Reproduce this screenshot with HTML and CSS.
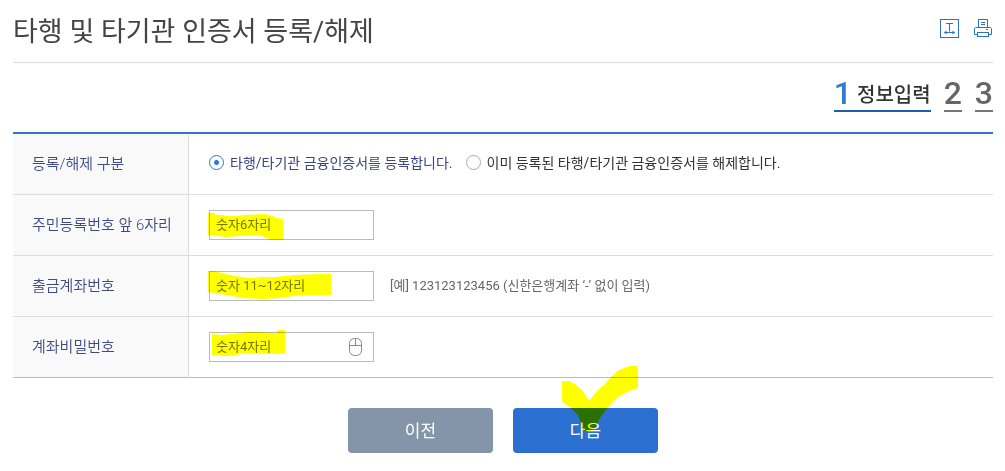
FILE: index.html
```html
<!DOCTYPE html>
<html lang="ko">
<head>
  <meta charset="UTF-8" />
  <meta name="viewport" content="width=device-width, initial-scale=1.0"/>
  <title>타행 및 타기관 인증서 등록/해제</title>
  <link rel="stylesheet" href="styles.css">
</head>
<body>

  <header class="page-header">
    <h1>타행 및 타기관 인증서 등록/해제</h1>
    <div class="tools">
      <button type="button" class="tool" aria-label="글자 크기">
        <svg width="19" height="19" viewBox="0 0 19 19" fill="none" stroke="currentColor">
          <rect x="0.5" y="0.5" width="18" height="18"/>
          <path d="M6 4.5h7M9.5 4.5v8M4.5 13.5h10"/>
          <path d="M6.5 11.5v4L4 13.5zM12.5 11.5v4l2.5-2z" fill="currentColor" stroke="none"/>
        </svg>
      </button>
      <button type="button" class="tool" aria-label="인쇄">
        <svg width="18" height="18" viewBox="0 0 18 18" fill="none" stroke="currentColor">
          <path d="M4.5 8.5v-8h9v8M7 3.5h4M7 5.5h4"/>
          <path d="M3.5 15.5h-3v-6l1-1h15l1 1v6h-3M12 10.5h2"/>
          <rect x="3.5" y="13.5" width="11" height="4"/>
        </svg>
      </button>
    </div>
  </header>

  <ol class="steps">
    <li class="active"><strong>1</strong><span>정보입력</span></li>
    <li><strong>2</strong></li>
    <li><strong>3</strong></li>
  </ol>

  <form id="certForm">
    <table class="form-table">
      <tbody>
        <tr>
          <th scope="row">등록/해제 구분</th>
          <td>
            <div class="radios">
              <label class="selected"><input type="radio" name="certType" value="add" checked />타행/타기관 금융인증서를 등록합니다.</label>
              <label><input type="radio" name="certType" value="remove" />이미 등록된 타행/타기관 금융인증서를 해제합니다.</label>
            </div>
          </td>
        </tr>
        <tr>
          <th scope="row"><label for="birth">주민등록번호 앞 6자리</label></th>
          <td>
            <div class="field">
              <input type="text" id="birth" placeholder="숫자6자리" />
              <svg class="marker marker-birth" width="75" height="27" viewBox="0 0 75 27">
                <path d="M0 0h7v2l7 0 5 1h8l10-1 20-1 8 2 4 2 6 1v21H62l-4-2-4-2-9-1-13 1-15 1-7-1-10-1z"/>
              </svg>
            </div>
          </td>
        </tr>
        <tr>
          <th scope="row"><label for="account">출금계좌번호</label></th>
          <td>
            <div class="field">
              <input type="text" id="account" placeholder="숫자 11~12자리" />
              <svg class="marker marker-account" width="123" height="28" viewBox="0 0 123 28">
                <path d="M0 0h6l8 2 13 3 15 2 12-1h13l20-2 25-1h11v21H92l-20 3-18 1-20-1-10-2-12-2-12-2z"/>
              </svg>
              <span class="hint">[예] 123123123456 (신한은행계좌 ‘-’ 없이 입력)</span>
            </div>
          </td>
        </tr>
        <tr>
          <th scope="row"><label for="accountPw">계좌비밀번호</label></th>
          <td>
            <div class="field">
              <input type="password" id="accountPw" placeholder="숫자4자리" />
              <button type="button" class="mouse" aria-label="마우스 입력">
                <svg width="13" height="18" viewBox="0 0 13 18" fill="none" stroke="currentColor">
                  <rect x="0.5" y="0.5" width="12" height="17" rx="5"/>
                  <path d="M0.5 7.5h12M6.5 0.5v7"/>
                </svg>
              </button>
              <svg class="marker marker-pw" width="73" height="26" viewBox="0 0 73 26">
                <path d="M0 4l10 1 10-1 8-1 6-1h11l20 1V0h8v23l-8 1-32-1-9 2-11 1-13-1z"/>
              </svg>
            </div>
          </td>
        </tr>
      </tbody>
    </table>

    <div class="buttons">
      <button type="button" class="btn btn-prev">이전</button>
      <div class="next-wrap">
        <button type="submit" class="btn btn-next">다음</button>
        <svg class="marker marker-check" width="76" height="66" viewBox="0 0 76 66">
          <path d="M0 15h8l6 4 7 6 6 10 8-10 8-7 6-7 8-7 11-4h8v22l-9 3-11 6-7 7-5 6-6 8-5 10-7 4-6-2-1-7-3-8-7-7-9-6z"/>
        </svg>
      </div>
    </div>
  </form>

</body>
</html>
```
FILE: styles.css
```css
* {
  box-sizing: border-box;
}

body {
  margin: 0;
  padding: 0 12px 16px 13px;
  background: #fff;
  color: #333;
  font-family: Roboto, "Noto Sans CJK KR", sans-serif;
  font-size: 14px;
}

button,
input {
  font-family: inherit;
}

.page-header {
  display: flex;
  justify-content: space-between;
  align-items: center;
  height: 63px;
  border-bottom: 1px solid #ddd;
}

.page-header h1 {
  margin: 0;
  padding-top: 2px;
  font-size: 27px;
  font-weight: 400;
  line-height: 40px;
  color: #444;
}

.tools {
  display: flex;
  align-items: center;
  gap: 15px;
  padding: 0 1px 6px 0;
}

.tool,
.mouse {
  display: block;
  padding: 0;
  border: none;
  background: none;
  color: #2b70c9;
  cursor: pointer;
}

.tool svg,
.mouse svg {
  display: block;
}

/* Steps */
.steps {
  list-style: none;
  display: flex;
  justify-content: flex-end;
  gap: 13px;
  margin: 0;
  padding: 13px 0 20px;
}

.steps li {
  display: flex;
  align-items: center;
  height: 36px;
  border-bottom: 2px solid #777;
  color: #666;
}

.steps strong {
  font-size: 32px;
  font-weight: 500;
  line-height: 34px;
}

.steps span {
  margin-left: 5px;
  padding-top: 3px;
  font-size: 20px;
  font-weight: 500;
  line-height: 34px;
}

.steps .active {
  border-color: #1a5fb4;
  color: #333;
}

.steps .active strong {
  color: #3079d8;
}

/* Form table */
.form-table {
  width: 100%;
  border-collapse: separate;
  border-spacing: 0;
  border-top: 2px solid #3077cf;
}

.form-table th,
.form-table td {
  height: 61px;
  padding: 0 20px;
  border-bottom: 1px solid #ddd;
  text-align: left;
}

.form-table th {
  width: 176px;
  padding: 0 0 4px 19px;
  border-right: 1px solid #ddd;
  background: #f9f9f9;
  color: #3f4a85;
  font-size: 15px;
  font-weight: 350;
  white-space: nowrap;
}

.form-table tr:last-child th,
.form-table tr:last-child td {
  border-bottom-color: #b9b9cb;
}

.radios {
  display: flex;
  gap: 13px;
  padding-bottom: 3px;
}

.radios label {
  display: flex;
  align-items: center;
  gap: 6px;
  line-height: 20px;
}

.radios .selected {
  color: #3a4585;
}

.radios input {
  appearance: none;
  width: 15px;
  height: 15px;
  margin: 0;
  border: 1px solid #aaa;
  border-radius: 50%;
}

.radios input:checked {
  border-color: #3077cf;
  background: radial-gradient(circle, #3077cf 2px, transparent 3px);
}

.field {
  position: relative;
  display: flex;
  align-items: center;
}

.field input {
  width: 165px;
  height: 30px;
  padding: 0 6px 2px;
  border: 1px solid #bbb;
  font-size: 13px;
}

.field input::placeholder {
  color: #757575;
}

.hint {
  margin-left: 16px;
  padding-bottom: 3px;
  font-size: 13px;
  color: #666;
}

.mouse {
  position: absolute;
  left: 140px;
  top: 6px;
  color: #888;
}

/* Highlighter strokes */
.marker {
  position: absolute;
  fill: #ff0;
  mix-blend-mode: multiply;
  pointer-events: none;
}

.marker-birth {
  left: -1px;
  top: 3px;
}

.marker-account {
  left: -1px;
  top: 0;
}

.marker-pw {
  left: 3px;
  top: -2px;
}

.marker-check {
  left: 49px;
  top: -42px;
}

/* Buttons */
.buttons {
  display: flex;
  justify-content: center;
  gap: 20px;
  padding-top: 30px;
}

.next-wrap {
  position: relative;
}

.btn {
  display: block;
  width: 145px;
  height: 45px;
  padding: 0 0 2px;
  border: none;
  border-radius: 4px;
  color: #fff;
  font-size: 17px;
  cursor: pointer;
}

.btn-prev {
  background: #8494a9;
}

.btn-next {
  background: #2b70d0;
}
```
